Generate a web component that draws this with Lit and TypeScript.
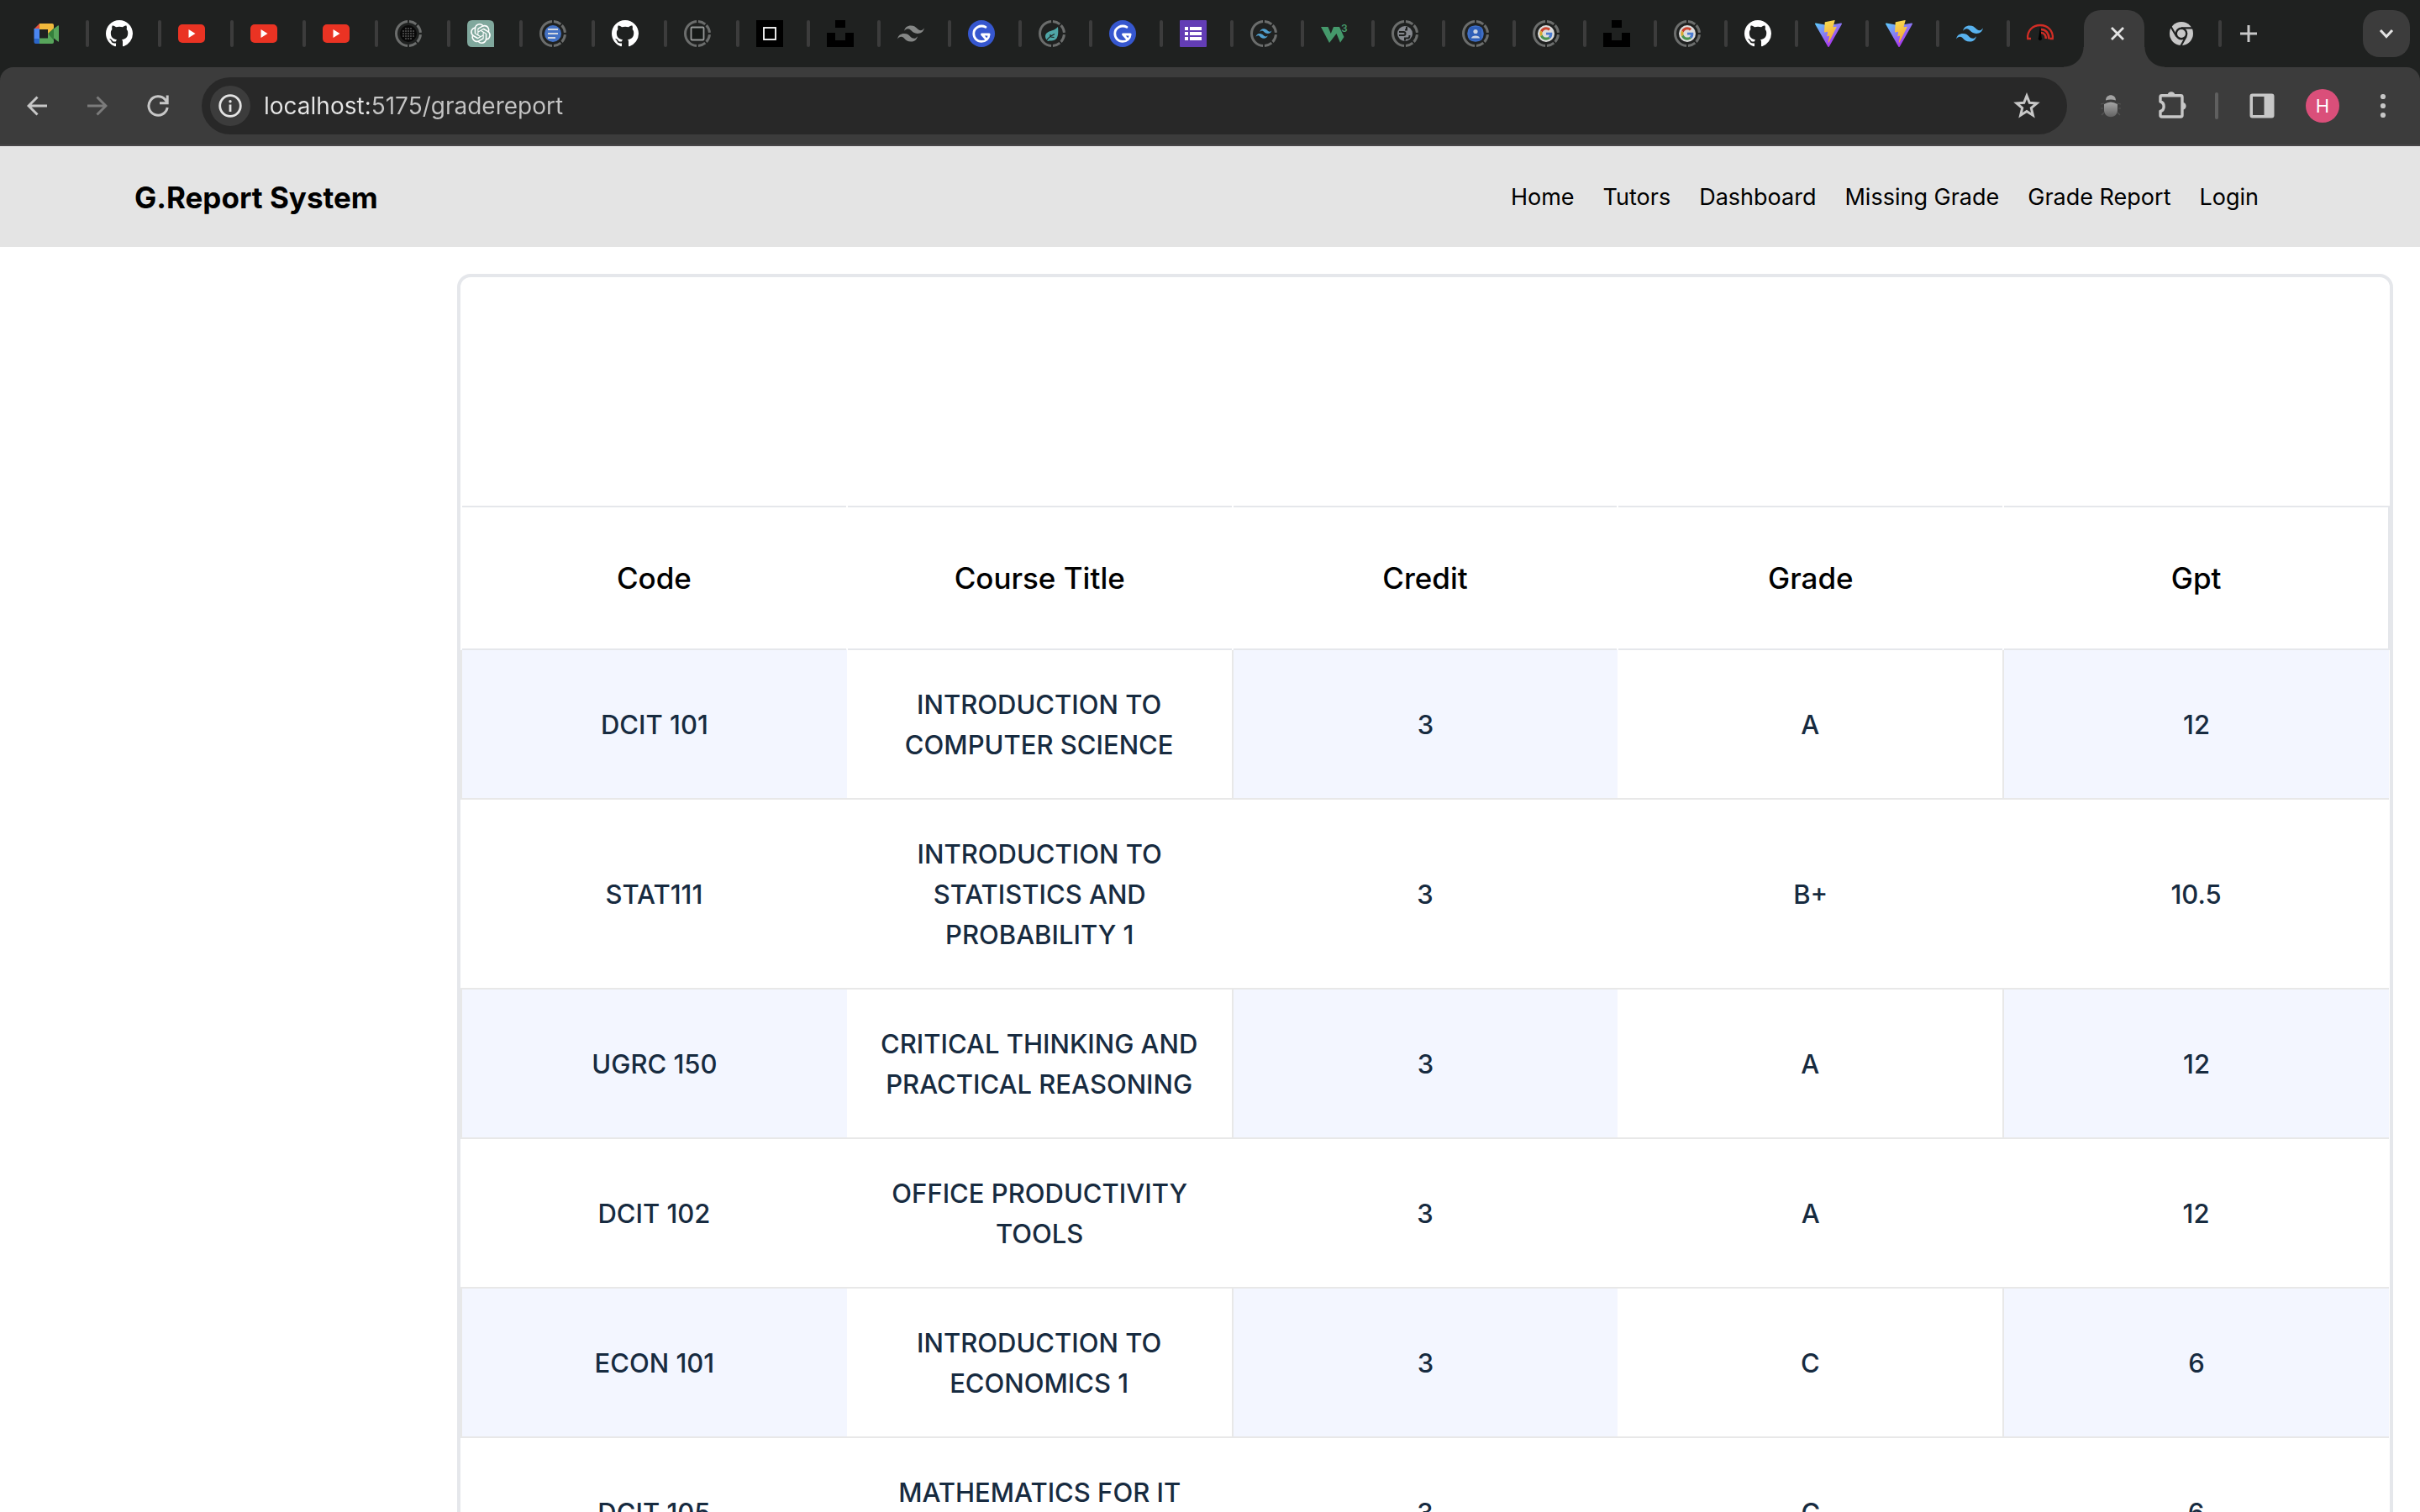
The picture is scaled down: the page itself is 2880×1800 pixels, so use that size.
import { LitElement, html, css, svg, nothing } from "lit";
import { customElement } from "lit/decorators.js";
import { classMap } from "lit/directives/class-map.js";

/* ---------- favicons, all drawn on a 32 unit square ---------- */

const ring = svg`<circle cx="16" cy="16" r="14.5" fill="none" stroke="#6b6d6c" stroke-width="3"
  pathLength="360" stroke-dasharray="36 7 38 10 38 7 36 8 172 8" stroke-dashoffset="-4"
  transform="rotate(-90 16 16)"/>`;

const TAILWIND =
  "M12.001 4.8c-3.2 0-5.2 1.6-6 4.8 1.2-1.6 2.6-2.2 4.2-1.8.913.228 1.565.89 2.288 1.624C13.666 10.618 15.027 12 18.001 12c3.2 0 5.2-1.6 6-4.8-1.2 1.6-2.6 2.2-4.2 1.8-.913-.228-1.565-.89-2.288-1.624C16.337 6.182 14.976 4.8 12.001 4.8zm-6 7.2c-3.2 0-5.2 1.6-6 4.8 1.2-1.6 2.6-2.2 4.2-1.8.913.228 1.565.89 2.288 1.624 1.177 1.194 2.538 2.576 5.512 2.576 3.2 0 5.2-1.6 6-4.8-1.2 1.6-2.6 2.2-4.2 1.8-.913-.228-1.565-.89-2.288-1.624C10.337 13.382 8.976 12 6.001 12z";

const OPENAI =
  "M22.2819 9.8211a5.9847 5.9847 0 0 0-.5157-4.9108 6.0462 6.0462 0 0 0-6.5098-2.9A6.0651 6.0651 0 0 0 4.9807 4.1818a5.9847 5.9847 0 0 0-3.9977 2.9 6.0462 6.0462 0 0 0 .7427 7.0966 5.98 5.98 0 0 0 .511 4.9107 6.051 6.051 0 0 0 6.5146 2.9001A5.9847 5.9847 0 0 0 13.2599 24a6.0557 6.0557 0 0 0 5.7718-4.2058 5.9894 5.9894 0 0 0 3.9977-2.9001 6.0557 6.0557 0 0 0-.7475-7.0729zm-9.022 12.6081a4.4755 4.4755 0 0 1-2.8764-1.0408l.1419-.0804 4.7783-2.7582a.7948.7948 0 0 0 .3927-.6813v-6.7369l2.02 1.1686a.071.071 0 0 1 .038.052v5.5826a4.504 4.504 0 0 1-4.4945 4.4944zm-9.6607-4.1254a4.4708 4.4708 0 0 1-.5346-3.0137l.142.0852 4.783 2.7582a.7712.7712 0 0 0 .7806 0l5.8428-3.3685v2.3324a.0804.0804 0 0 1-.0332.0615L9.74 19.9502a4.4992 4.4992 0 0 1-6.1408-1.6464zM2.3408 7.8956a4.485 4.485 0 0 1 2.3655-1.9728V11.6a.7664.7664 0 0 0 .3879.6765l5.8144 3.3543-2.0201 1.1685a.0757.0757 0 0 1-.071 0l-4.8303-2.7865A4.504 4.504 0 0 1 2.3408 7.872zm16.5963 3.8558L13.1038 8.364 15.1192 7.2a.0757.0757 0 0 1 .071 0l4.8303 2.7913a4.4944 4.4944 0 0 1-.6765 8.1042v-5.6772a.79.79 0 0 0-.407-.667zm2.0107-3.0231l-.142-.0852-4.7735-2.7818a.7759.7759 0 0 0-.7854 0L9.409 9.2297V6.8974a.0662.0662 0 0 1 .0284-.0615l4.8303-2.7866a4.4992 4.4992 0 0 1 6.6802 4.66zM8.3065 12.863l-2.02-1.1638a.0804.0804 0 0 1-.038-.0567V6.0742a4.4992 4.4992 0 0 1 7.3757-3.4537l-.142.0805L8.704 5.459a.7948.7948 0 0 0-.3927.6813zm1.0976-2.3654l2.602-1.4998 2.6069 1.4998v2.9994l-2.5974 1.4997-2.6067-1.4997Z";

const dotGrid = [10, 13, 16, 19, 22].flatMap((x) =>
  [10, 13, 16, 19, 22]
    .filter((y) => Math.hypot(x - 16, y - 16) < 7)
    .map((y) => svg`<circle cx=${x} cy=${y} r=".8" fill="#8a8a8a"/>`)
);

const favicons: Record<string, unknown> = {
  meet: svg`
    <path d="M7 4L.5 10.500H7z" fill="#e0503f"/>
    <path d="M.5 10H7v12H.5z" fill="#4a86f0"/>
    <path d="M.5 22H7.500v6H2.500q-2 0-2-2z" fill="#2b66c9"/>
    <path d="M7 4h15q2 0 2 2v7l-7 5v-7H7z" fill="#f0b93c"/>
    <path d="M7 21.500h10v-4l7-2V26q0 2-2 2H7z" fill="#57a55b"/>
    <path d="M17 16l7-6.500v14.500z" fill="#35803c"/>
    <path d="M24 10.200l4.800-3.800q1.200-.6 1.200.8v17.600q0 1.400-1.200.5L24 21.500z" fill="#57a55b"/>`,
  github: svg`<path transform="scale(2)" fill="#fff" fill-rule="evenodd" d="M8 0C3.580 0 0 3.580 0 8c0 3.540 2.290 6.530 5.470 7.590.4.070.550-.170.550-.380 0-.190-.010-.820-.010-1.490-2.010.370-2.530-.490-2.690-.940-.090-.230-.480-.940-.820-1.130-.280-.150-.680-.520-.010-.530.630-.010 1.080.580 1.230.820.720 1.210 1.870.870 2.330.660.070-.520.280-.870.510-1.070-1.780-.2-3.640-.890-3.640-3.950 0-.870.310-1.590.820-2.150-.080-.2-.360-1.020.080-2.120 0 0 .670-.210 2.200.820.640-.180 1.320-.270 2-.270s1.360.090 2 .270c1.530-1.040 2.200-.820 2.200-.820.440 1.100.160 1.920.080 2.120.510.560.820 1.270.820 2.150 0 3.070-1.870 3.750-3.650 3.950.290.250.540.730.540 1.480 0 1.070-.010 1.930-.010 2.200 0 .210.150.460.550.380A8.010 8.010 0 0 0 16 8c0-4.420-3.580-8-8-8z"/>`,
  youtube: svg`<rect x="0" y="5" width="32" height="22" rx="5" fill="#ea3323"/><path d="M12.500 11v10l8-5z" fill="#fff"/>`,
  dark: svg`${ring}<circle cx="16" cy="16" r="10" fill="#090909"/>${dotGrid}`,
  openai: svg`<path d="M6 0h20q6 0 6 6v26H6q-6 0-6-6V6q0-6 6-6z" fill="#80a89d"/><path transform="translate(4 4)" fill="#fff" d=${OPENAI}/>`,
  docs: svg`${ring}<circle cx="16" cy="16" r="10" fill="#4472c4"/><path d="M10 11h12M10 16h12M10 21h9" stroke="#d3d8e0" stroke-width="2"/>`,
  box: svg`${ring}<rect x="8.500" y="8.500" width="15" height="15" rx="1" fill="#161a18" stroke="#969998" stroke-width="1.800"/>`,
  square: svg`<rect width="32" height="32" fill="#000"/><rect x="9" y="9" width="14" height="14" fill="#000" stroke="#fff" stroke-width="1.800"/>`,
  unsplash: svg`<path d="M10 0h12v9H10zM0 15h10v9h12v-9h10v17H0z" fill="#000"/>`,
  tailwindGray: svg`<path transform="scale(1.333)" fill="#858786" d=${TAILWIND}/>`,
  tailwind: svg`<path transform="scale(1.333)" fill="#58b2ee" d=${TAILWIND}/>`,
  tailwindRing: svg`${ring}<path transform="translate(6.500 6.500) scale(.79)" fill="#4f9fce" d=${TAILWIND}/>`,
  gBlue: svg`<circle cx="16" cy="16" r="16" fill="#3657cf"/>
    <path d="M21 8.200C14.500 5 6.800 9 6.800 16c0 5.500 4 9.400 9.200 9.400 5.200 0 8.800-3.400 9.200-8.400H16.500l4.500 5" fill="none" stroke="#fff" stroke-width="2.800" stroke-linecap="round" stroke-linejoin="round"/>`,
  leaf: svg`${ring}<path d="M23 8c.8 8 .5 16.500-7.500 16.500-2 0-3.500-.5-4.500.5-2.500-2-4.500-6.500-1.500-9.500C13 12 19 13 23 8z" fill="#4fa6a6"/>
    <path d="M9 25c2-4 5-6 10-8.500M14 20v-3M14.500 20l4 .5" stroke="#1f2120" stroke-width="1.200" fill="none"/>`,
  forms: svg`<rect width="32" height="32" rx="1" fill="#633db5"/>
    <path d="M6 8h4v4H6zM12 8h14v4H12zM6 14h4v4H6zM12 14h14v4H12zM6 20h4v4H6zM12 20h14v4H12z" fill="#fff"/>`,
  w3: svg`<path d="M0 8H8.500L11.800 16 15 8H22L27.500 20 23 26.800 18.500 16 10 27Z" fill="#45996b"/>
    <text x="24" y="14" font-family="Inter, sans-serif" font-size="12" font-weight="600" fill="#45996b">3</text>`,
  globe: svg`${ring}<circle cx="16" cy="16" r="9" fill="#85888e"/>
    <path d="M9 14h5.500q2 0 2 2t-2 2H9M16 24.500v-3h3.500q2 0 2-3.500M18 8v3.500h-2" fill="none" stroke="#1f2120" stroke-width="2"/>`,
  contact: svg`${ring}<rect x="7" y="7" width="18" height="18" rx="6" fill="#3a66b8"/>
    <circle cx="16" cy="16" r="9.800" fill="#3f6fc6"/><rect x="9" y="8" width="14" height="16" fill="#2f5fb8"/>
    <circle cx="16" cy="13.500" r="2.600" fill="#c9d2e2"/><path d="M11 21.500c0-4 10-4 10 0z" fill="#c9d2e2"/>`,
  google: svg`${ring}<circle cx="16" cy="16" r="10" fill="#dcdcdc"/>
    <g transform="translate(8.300 8.300) scale(.32)">
      <path fill="#c9442f" d="M24 9.500c3.540 0 6.710 1.220 9.210 3.600l6.850-6.850C35.900 2.380 30.470 0 24 0 14.620 0 6.510 5.380 2.560 13.220l7.980 6.190C12.430 13.720 17.740 9.500 24 9.500z"/>
      <path fill="#4a7bd0" d="M46.980 24.550c0-1.570-.150-3.090-.380-4.550H24v9.020h12.940c-.580 2.960-2.260 5.480-4.780 7.180l7.730 6c4.510-4.180 7.090-10.360 7.090-17.650z"/>
      <path fill="#d9a82e" d="M10.530 28.590c-.480-1.450-.760-2.990-.760-4.590s.270-3.140.760-4.590l-7.980-6.190C.920 16.460 0 20.120 0 24c0 3.880.920 7.540 2.560 10.780l7.970-6.190z"/>
      <path fill="#4a934f" d="M24 48c6.480 0 11.930-2.130 15.890-5.810l-7.730-6c-2.150 1.450-4.920 2.300-8.160 2.300-6.260 0-11.570-4.220-13.470-9.910l-7.980 6.190C6.510 42.620 14.620 48 24 48z"/>
    </g>`,
  vite: svg`<defs>
      <linearGradient id="viteBody" x1="0" y1="0.100" x2="0.600" y2="0.850"><stop offset="0" stop-color="#5fc3fa"/><stop offset="1" stop-color="#a93cf0"/></linearGradient>
      <linearGradient id="viteBolt" x1="0.400" y1="0" x2="0.600" y2="0.900"><stop offset="0" stop-color="#f8d94e"/><stop offset="1" stop-color="#f3a83b"/></linearGradient>
    </defs>
    <g transform="scale(.125)">
      <path fill="url(#viteBody)" d="M255.153 37.938L134.897 252.976c-2.483 4.440-8.862 4.466-11.382.048L.875 37.958c-2.746-4.814 1.371-10.646 6.827-9.670l120.385 21.517a6.537 6.537 0 0 0 2.322-.004l117.867-21.483c5.438-.991 9.574 4.796 6.877 9.620Z"/>
      <path fill="url(#viteBolt)" d="M185.432.063L96.440 17.501a3.268 3.268 0 0 0-2.634 3.014l-5.474 92.456a3.268 3.268 0 0 0 3.997 3.378l24.777-5.718c2.318-.535 4.413 1.507 3.936 3.838l-7.361 36.047c-.495 2.426 1.782 4.500 4.151 3.780l15.304-4.649c2.372-.720 4.652 1.360 4.150 3.788l-11.698 56.621c-.732 3.542 3.979 5.473 5.943 2.437l1.313-2.028l72.516-144.720c1.215-2.423-.880-5.186-3.540-4.672l-25.505 4.922c-2.396.462-4.435-1.770-3.759-4.114l16.646-57.705c.677-2.350-1.370-4.583-3.769-4.113Z"/>
    </g>`,
  gauge: svg`<g fill="none" stroke="#d12d25">
      <path d="M5 22H1.200C.2 12.500 7 6 16 6s15.800 6.500 14.800 16H27.500" stroke-width="2.300"/>
      <path d="M17 11c6 0 9.500 5 9.500 11.500M17 15c4 0 5.800 3.500 5.800 7" stroke-width="2.600"/></g>
    <path d="M16 7.500l1.600 13a2.200 2.200 0 1 1-3.400 0z" fill="#000"/>`,
  chrome: svg`<circle cx="16" cy="16" r="14" fill="#c7c7c7"/>
    <g stroke="#1f2120" stroke-width="2.200" fill="none"><path d="M16 9.300h13.500M10.200 19.300L3.400 7.500M21.800 19.300L15.300 30.800"/></g>
    <circle cx="16" cy="16" r="6.200" fill="#c7c7c7" stroke="#1f2120" stroke-width="2.400"/>`,
};

interface Tab { icon: string; name: string }

const tab = (icon: string, name: string): Tab => ({ icon, name });

const wideTabs: Tab[] = [
  tab("meet", "Meet"), tab("github", "GitHub"), tab("youtube", "YouTube"), tab("youtube", "YouTube"),
  tab("youtube", "YouTube"), tab("dark", "Particles"), tab("openai", "ChatGPT"), tab("docs", "Documents"),
  tab("github", "GitHub"), tab("box", "Box"),
];

const narrowTabs: Tab[] = [
  tab("square", "Square"), tab("unsplash", "Unsplash"), tab("tailwindGray", "Tailwind"), tab("gBlue", "G"),
  tab("leaf", "Leaf"), tab("gBlue", "G"), tab("forms", "Forms"), tab("tailwindRing", "Tailwind"),
  tab("w3", "W3"), tab("globe", "Web page"), tab("contact", "Contacts"), tab("google", "Google"),
  tab("unsplash", "Unsplash"), tab("google", "Google"), tab("github", "GitHub"), tab("vite", "Vite"),
  tab("vite", "Vite"), tab("tailwind", "Tailwind"), tab("gauge", "Gauge"),
];

@customElement("browser-tabs")
export class BrowserTabs extends LitElement {
  static styles = css`
    :host { display: block; background: #1f2120; }
    .strip { display: flex; align-items: center; height: 80px; padding: 0 12px 0 20px; box-sizing: border-box; }
    button { all: unset; box-sizing: border-box; display: flex; align-items: center; cursor: pointer; }
    svg { display: block; flex: none; overflow: visible; }
    .tab { padding-left: 20px; gap: 30px; }
    .tab.narrow { gap: 28px; }
    .divider { width: 4px; height: 32px; border-radius: 2px; background: #3c3c3c; }
    .active {
      position: relative; justify-content: center; width: 72px; height: 68px; margin: 12px 0 0 36px;
      padding-left: 8px; padding-bottom: 12px; border-radius: 20px 20px 0 0; background: #3c3c3c;
    }
    .active::before, .active::after { content: ""; position: absolute; bottom: 0; width: 24px; height: 24px; }
    .active::before { right: 100%; background: radial-gradient(circle at 0 0, #1f2120 23px, #3c3c3c 24px); }
    .active::after { left: 100%; background: radial-gradient(circle at 100% 0, #1f2120 23px, #3c3c3c 24px); }
    .after { padding-left: 28px; }
    .plus { margin-left: 22px; }
    .menu { justify-content: center; width: 56px; height: 56px; margin-left: auto; border-radius: 20px; background: #3c3c3c; }
  `;

  private renderTab(t: Tab, narrow: boolean, last = false) {
    return html`<button class=${classMap({ tab: true, narrow })} aria-label=${t.name}>
      <svg width="32" height="32" viewBox="0 0 32 32">${favicons[t.icon]}</svg>
      ${last ? nothing : html`<span class="divider"></span>`}
    </button>`;
  }

  render() {
    return html`<div class="strip">
      ${wideTabs.map((t) => this.renderTab(t, false))}
      ${narrowTabs.map((t, i) => this.renderTab(t, true, i === narrowTabs.length - 1))}
      <button class="active" aria-label="Close tab">
        <svg width="20" height="20" viewBox="0 0 20 20"><path d="M3 3l14 14M17 3L3 17" stroke="#e3e3e3" stroke-width="2.800"/></svg>
      </button>
      <button class="tab narrow after" aria-label="Chrome">
        <svg width="32" height="32" viewBox="0 0 32 32">${favicons.chrome}</svg>
        <span class="divider"></span>
      </button>
      <button class="plus" aria-label="New tab">
        <svg width="20" height="20" viewBox="0 0 20 20"><path d="M10 0v20M0 10h20" stroke="#c7c7c7" stroke-width="3"/></svg>
      </button>
      <button class="menu" aria-label="Search tabs">
        <svg width="20" height="20" viewBox="0 0 20 20"><path d="M3 6l7 7.500L17 6" fill="none" stroke="#e3e3e3" stroke-width="3"/></svg>
      </button>
    </div>`;
  }
}

@customElement("browser-toolbar")
export class BrowserToolbar extends LitElement {
  static styles = css`
    :host { display: block; background: #1f2120; }
    .bar {
      display: flex; align-items: center; height: 94px; padding: 0 24px; box-sizing: border-box;
      border-radius: 16px 16px 0 0; background: linear-gradient(#3c3c3c 92px, #484648 92px); border-bottom: 2px solid transparent;
      background-origin: border-box;
    }
    button { all: unset; display: flex; align-items: center; justify-content: center; width: 40px; height: 40px; cursor: pointer; }
    svg { display: block; flex: none; }
    .history { display: flex; gap: 32px; margin-right: 32px; }
    .address {
      flex: 1; display: flex; align-items: center; gap: 16px; height: 68px; padding: 0 28px 0 10px;
      box-sizing: border-box; border-radius: 34px; background: #282828;
    }
    .address .info { width: 48px; height: 48px; border-radius: 24px; background: #3c3c3c; }
    input {
      all: unset; flex: 1; font: 400 28px/40px Inter, "Liberation Sans", sans-serif; color: transparent;
      background: linear-gradient(90deg, #e6e6e6 125px, #c4c4c4 125px);
      -webkit-background-clip: text; background-clip: text;
    }
    .extras { display: flex; align-items: center; gap: 32px; margin-left: 32px; }
    .rule { width: 4px; height: 32px; border-radius: 2px; background: #5f5f5f; }
    .profile { display: flex; align-items: center; gap: 32px; margin-left: 32px; }
    .avatar { border-radius: 20px; background: #da4f7a; color: #fff; font: 400 22px/40px Inter, "Liberation Sans", sans-serif; }
  `;

  render() {
    return html`<div class="bar">
      <div class="history">
        <button aria-label="Back"><svg width="24" height="24" viewBox="0 0 24 24"><path d="M24 12H2M12.500 1.500L2 12l10.500 10.500" fill="none" stroke="#c7c7c7" stroke-width="3"/></svg></button>
        <button aria-label="Forward"><svg width="24" height="24" viewBox="0 0 24 24"><path d="M0 12h22M11.500 1.500L22 12 11.500 22.500" fill="none" stroke="#7b7b7b" stroke-width="3"/></svg></button>
        <button aria-label="Reload"><svg width="28" height="28" viewBox="0 0 28 28"><path d="M25.200 16A11.200 11.200 0 1 1 22.500 6.500l2.500 3M25.200 1.500v9.200H16" fill="none" stroke="#c7c7c7" stroke-width="3"/></svg></button>
      </div>
      <div class="address">
        <button class="info" aria-label="Site information"><svg width="28" height="28" viewBox="0 0 28 28"><circle cx="14" cy="14" r="12.300" fill="none" stroke="#e3e3e3" stroke-width="2.800"/><path d="M14 12.500V21" stroke="#e3e3e3" stroke-width="2.800"/><circle cx="14" cy="8.700" r="1.700" fill="#e3e3e3"/></svg></button>
        <input type="text" aria-label="Address" value="localhost:5175/gradereport" />
        <button aria-label="Bookmark"><svg width="32" height="32" viewBox="0 0 32 32"><path d="M16 4l3.300 8.300 8.700.6-6.700 5.700 2.100 8.700L16 22.600l-7.400 4.700 2.100-8.700L4 12.900l8.700-.6z" fill="none" stroke="#c7c7c7" stroke-width="3"/></svg></button>
      </div>
      <div class="extras">
        <button aria-label="Bug extension"><svg width="32" height="32" viewBox="0 0 32 32">
          <defs><linearGradient id="bug" x1="0" y1="0" x2="0" y2="1"><stop offset="0" stop-color="#a5a5a5"/><stop offset="1" stop-color="#636363"/></linearGradient></defs>
          <path d="M10 9.500C10 1 22 1 22 9.500q-6-2-12 0z" fill="#a3a3a3"/>
          <path d="M8 14q8-5 16 0v7c0 11-16 11-16 0z" fill="url(#bug)"/>
          <path d="M8 13l-4 1M7 19H4M8 24l-3 3M24 13l4 1M25 19h3M24 24l3 3" stroke="#555" stroke-width="1.200"/></svg></button>
        <button aria-label="Extensions"><svg width="36" height="36" viewBox="0 0 36 36">
          <path d="M5 7.500Q5 5.800 6.700 5.800H29.300Q31 5.800 31 7.500V29.300Q31 31 29.300 31H6.700Q5 31 5 29.300V24.500C10.500 23 10.500 14.500 5 13z" fill="none" stroke="#c7c7c7" stroke-width="3.400" stroke-linejoin="round"/>
          <path d="M13.500 5.500C13.500-.2 22.500-.2 22.500 5.500zM31.500 14C37 14 37 22.500 31.500 22.500z" fill="#c7c7c7"/></svg></button>
      </div>
      <div class="profile">
        <span class="rule"></span>
        <button aria-label="Side panel"><svg width="30" height="30" viewBox="0 0 30 30"><path fill-rule="evenodd" d="M3.500.5h23q3 0 3 3v23q0 3-3 3h-23q-3 0-3-3v-23q0-3 3-3zM4 4v22h13.500V4z" fill="#c7c7c7"/></svg></button>
        <button class="avatar" aria-label="Profile H">H</button>
        <button aria-label="Menu"><svg width="32" height="32" viewBox="0 0 32 32" fill="#c7c7c7"><circle cx="16" cy="5" r="3.100"/><circle cx="16" cy="16" r="3.100"/><circle cx="16" cy="27" r="3.100"/></svg></button>
      </div>
    </div>`;
  }
}

@customElement("site-header")
export class SiteHeader extends LitElement {
  static styles = css`
    :host { display: block; background: #e4e4e4; color: #000; font-family: Inter, "Liberation Sans", sans-serif; }
    .bar { display: flex; align-items: center; justify-content: space-between; padding: 37px 192px 35px 160px; }
    .brand { font-size: 35px; line-height: 48px; font-weight: 700; }
    nav { display: flex; gap: 34px; }
    a { color: inherit; text-decoration: none; }
    nav a { font-size: 27px; line-height: 48px; }
  `;

  render() {
    const links = ["Home", "Tutors", "Dashboard", "Missing Grade", "Grade Report", "Login"];
    return html`<div class="bar">
      <a class="brand" href="#home">G.Report System</a>
      <nav>${links.map((l) => html`<a href="#${l.toLowerCase().replace(" ", "-")}">${l}</a>`)}</nav>
    </div>`;
  }
}

const columns = ["Code", "Course Title", "Credit", "Grade", "Gpt"];
const courses: string[][] = [
  ["DCIT 101", "INTRODUCTION TO COMPUTER SCIENCE", "3", "A", "12"],
  ["STAT111", "INTRODUCTION TO STATISTICS AND PROBABILITY 1", "3", "B+", "10.5"],
  ["UGRC 150", "CRITICAL THINKING AND PRACTICAL REASONING", "3", "A", "12"],
  ["DCIT 102", "OFFICE PRODUCTIVITY TOOLS", "3", "A", "12"],
  ["ECON 101", "INTRODUCTION TO ECONOMICS 1", "3", "C", "6"],
  ["DCIT 105", "MATHEMATICS FOR IT PROFESSIONALS", "3", "C", "6"],
];

@customElement("grade-table")
export class GradeTable extends LitElement {
  static styles = css`
    :host {
      display: block; width: 80%; margin: 32px 32px 32px auto; box-sizing: border-box; padding-top: 272px;
      border: 4px solid #e5e7eb; border-radius: 16px; font-family: Inter, "Liberation Sans", sans-serif; text-align: center;
    }
    table { width: 100%; table-layout: fixed; border-collapse: collapse; }
    thead tr { border-top: 2px solid #e5e7eb; border-bottom: 2px solid #e5e7eb; }
    th {
      padding: 56px 16px; border-left: 2px solid transparent;
      color: #000; font-size: 35px; line-height: 56px; font-weight: 500;
    }
    th:last-child { border-right: 2px solid #e5e7eb; }
    td {
      padding: 41px 16px 39px; border-bottom: 2px solid #e8e8e8; color: #172b40;
      font-size: 31px; line-height: 48px; font-weight: 500;
    }
    tbody tr:nth-child(odd) td:nth-child(odd) { border-left: 2px solid #e8e8e8; background: #f3f6ff; }
  `;

  render() {
    return html`<table>
      <thead><tr>${columns.map((c) => html`<th scope="col">${c}</th>`)}</tr></thead>
      <tbody>${courses.map((row) => html`<tr>${row.map((v) => html`<td>${v}</td>`)}</tr>`)}</tbody>
    </table>`;
  }
}

@customElement("app-root")
export class AppRoot extends LitElement {
  static styles = css`
    :host { display: flex; flex-direction: column; height: 100vh; background: #fff; }
    .page { flex: 1; min-height: 0; overflow-y: auto; scrollbar-width: none; }
  `;

  render() {
    return html`
      <browser-tabs></browser-tabs>
      <browser-toolbar></browser-toolbar>
      <div class="page">
        <site-header></site-header>
        <main><grade-table></grade-table></main>
      </div>
    `;
  }
}
